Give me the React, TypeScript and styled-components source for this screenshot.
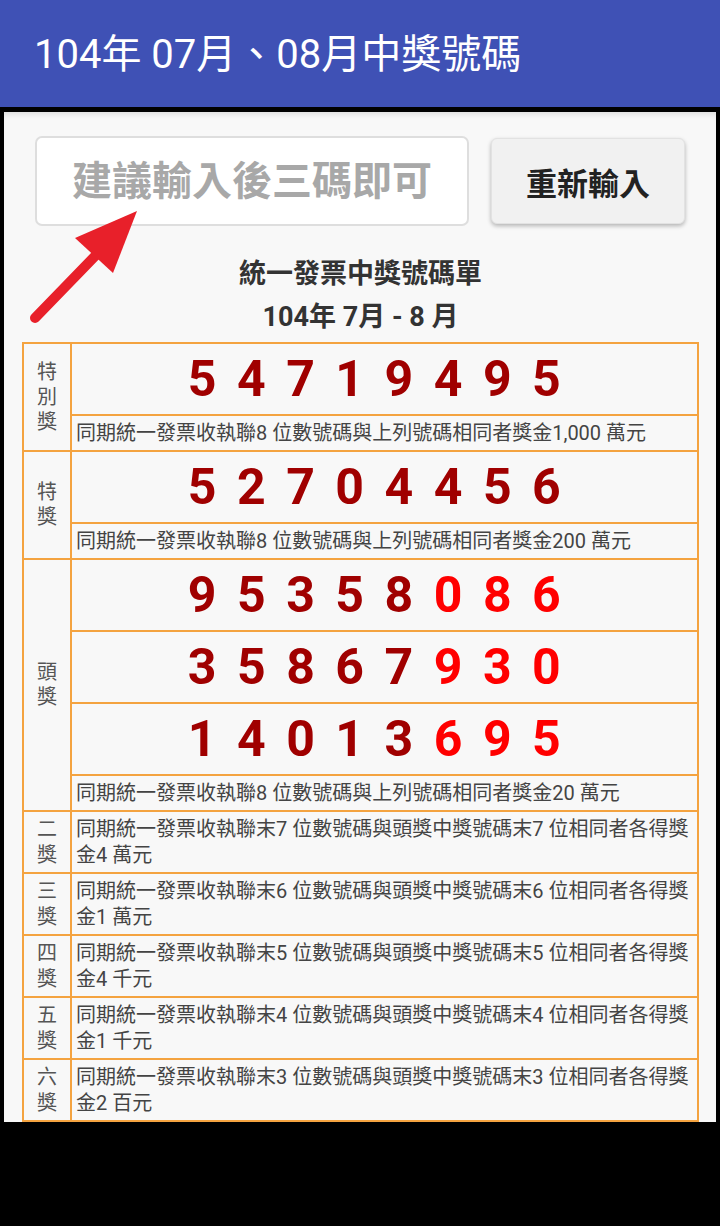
import React from 'react';
import styled, { createGlobalStyle } from 'styled-components';

type Prize = {
  label: string;
  numbers: string[];
  desc: string;
  highlight?: number;
};

const FONT = `Roboto, "Noto Sans CJK TC", sans-serif`;

const GlobalStyle = createGlobalStyle`
  html, body {
    margin: 0;
    padding: 0;
    background: #000;
  }
  #root {
    width: 720px;
  }
  * {
    box-sizing: border-box;
  }
`;

const TOP_PRIZES: Prize[] = [
  {
    label: '特別獎',
    numbers: ['54719495'],
    desc: '同期統一發票收執聯8 位數號碼與上列號碼相同者獎金1,000 萬元',
  },
  {
    label: '特獎',
    numbers: ['52704456'],
    desc: '同期統一發票收執聯8 位數號碼與上列號碼相同者獎金200 萬元',
  },
  {
    label: '頭獎',
    numbers: ['95358086', '35867930', '14013695'],
    desc: '同期統一發票收執聯8 位數號碼與上列號碼相同者獎金20 萬元',
    highlight: 3,
  },
];

const SUB_PRIZES = [
  { label: '二獎', digits: 7, amount: '4 萬元' },
  { label: '三獎', digits: 6, amount: '1 萬元' },
  { label: '四獎', digits: 5, amount: '4 千元' },
  { label: '五獎', digits: 4, amount: '1 千元' },
  { label: '六獎', digits: 3, amount: '2 百元' },
];

export default function App() {
  return (
    <>
      <GlobalStyle />
      <AppBar>104年 07月、08月中獎號碼</AppBar>
      <Panel>
        <Controls>
          <CodeInput placeholder="建議輸入後三碼即可" />
          <ResetButton>重新輸入</ResetButton>
        </Controls>

        {/* 入力欄を指す赤い矢印 */}
        <Arrow width="130" height="130" viewBox="0 0 130 130">
          <line x1="15" y1="118" x2="78" y2="53" stroke="#e8202a" strokeWidth="10" strokeLinecap="round" />
          <polygon points="55,38 117,11 93,73" fill="#e8202a" />
        </Arrow>

        <Heading>
          <div>統一發票中獎號碼單</div>
          <div>104年 7月 - 8 月</div>
        </Heading>

        <Table>
          {TOP_PRIZES.map((prize) => (
            <React.Fragment key={prize.label}>
              <Label $span={prize.numbers.length + 1}>{prize.label}</Label>
              {prize.numbers.map((num) => (
                <NumberCell key={num}>
                  {num.split('').map((d, i) => (
                    <Digit key={i} $hot={!!prize.highlight && i >= num.length - prize.highlight}>
                      {d}
                    </Digit>
                  ))}
                </NumberCell>
              ))}
              <Desc>{prize.desc}</Desc>
            </React.Fragment>
          ))}
          {SUB_PRIZES.map((p) => (
            <React.Fragment key={p.label}>
              <Label $span={1} $lh={26}>
                {p.label}
              </Label>
              <Desc $tall>
                {`同期統一發票收執聯末${p.digits} 位數號碼與頭獎中獎號碼末${p.digits} 位相同者各得獎金${p.amount}`}
              </Desc>
            </React.Fragment>
          ))}
        </Table>
      </Panel>
    </>
  );
}

// 上の青いバー
const AppBar = styled.header`
  height: 107px;
  background: #3f51b5;
  color: #fff;
  display: flex;
  align-items: center;
  padding-left: 34px;
  padding-bottom: 6px;
  font-family: ${FONT};
  font-size: 40px;
  font-weight: 400;
`;

// 白っぽい本体
const Panel = styled.main`
  position: relative;
  margin: 5px 4px 0 4px;
  background: #f8f8f8;
  padding: 24px 17px 0 18px;
  box-shadow: inset 0 6px 6px -4px rgba(0, 0, 0, 0.12);
  font-family: ${FONT};
`;

const Controls = styled.div`
  display: flex;
  align-items: center;
  gap: 22px;
  padding: 0 14px 0 13px;
`;

const CodeInput = styled.input`
  flex: 1;
  min-width: 0;
  height: 90px;
  border: 2px solid #dedede;
  border-radius: 7px;
  background: #fff;
  text-align: center;
  font-family: ${FONT};
  font-size: 40px;
  font-weight: 700;
  color: #333;
  outline: none;
  &::placeholder {
    color: #a8a8a8;
  }
`;

const ResetButton = styled.button`
  width: 194px;
  height: 86px;
  border: 1px solid #e2e2e2;
  border-radius: 6px;
  background: #f1f1f1;
  box-shadow: 0 2px 4px rgba(0, 0, 0, 0.28);
  font-family: ${FONT};
  font-size: 31px;
  font-weight: 700;
  color: #222;
`;

const Arrow = styled.svg`
  position: absolute;
  left: 16px;
  top: 88px;
`;

const Heading = styled.div`
  margin-top: 27px;
  text-align: center;
  font-size: 27px;
  line-height: 43px;
  font-weight: 700;
  color: #333;
`;

// 表。オレンジの背景とgapで罫線を作る
const Table = styled.div`
  margin-top: 3px;
  display: grid;
  grid-template-columns: 46px 1fr;
  gap: 2px;
  padding: 2px;
  background: #f4a340;
`;

const Label = styled.div<{ $span: number; $lh?: number }>`
  grid-row: span ${(p) => p.$span};
  background: #f8f8f8;
  display: flex;
  align-items: center;
  justify-content: center;
  padding: 0 12px;
  text-align: center;
  font-size: 20px;
  line-height: ${(p) => p.$lh ?? 25}px;
  color: #555;
`;

const NumberCell = styled.div`
  height: 70px;
  background: #f8f8f8;
  display: flex;
  align-items: center;
  justify-content: center;
  font-family: Roboto, sans-serif;
  font-size: 50px;
  font-weight: 700;
  letter-spacing: 20.5px;
`;

const Digit = styled.span<{ $hot: boolean }>`
  color: ${(p) => (p.$hot ? '#ff0000' : '#a00000')};
`;

const Desc = styled.div<{ $tall?: boolean }>`
  background: #f8f8f8;
  min-height: ${(p) => (p.$tall ? 60 : 34)}px;
  display: flex;
  align-items: center;
  padding: 0 4px;
  font-size: 20px;
  line-height: 26px;
  color: #444;
`;
